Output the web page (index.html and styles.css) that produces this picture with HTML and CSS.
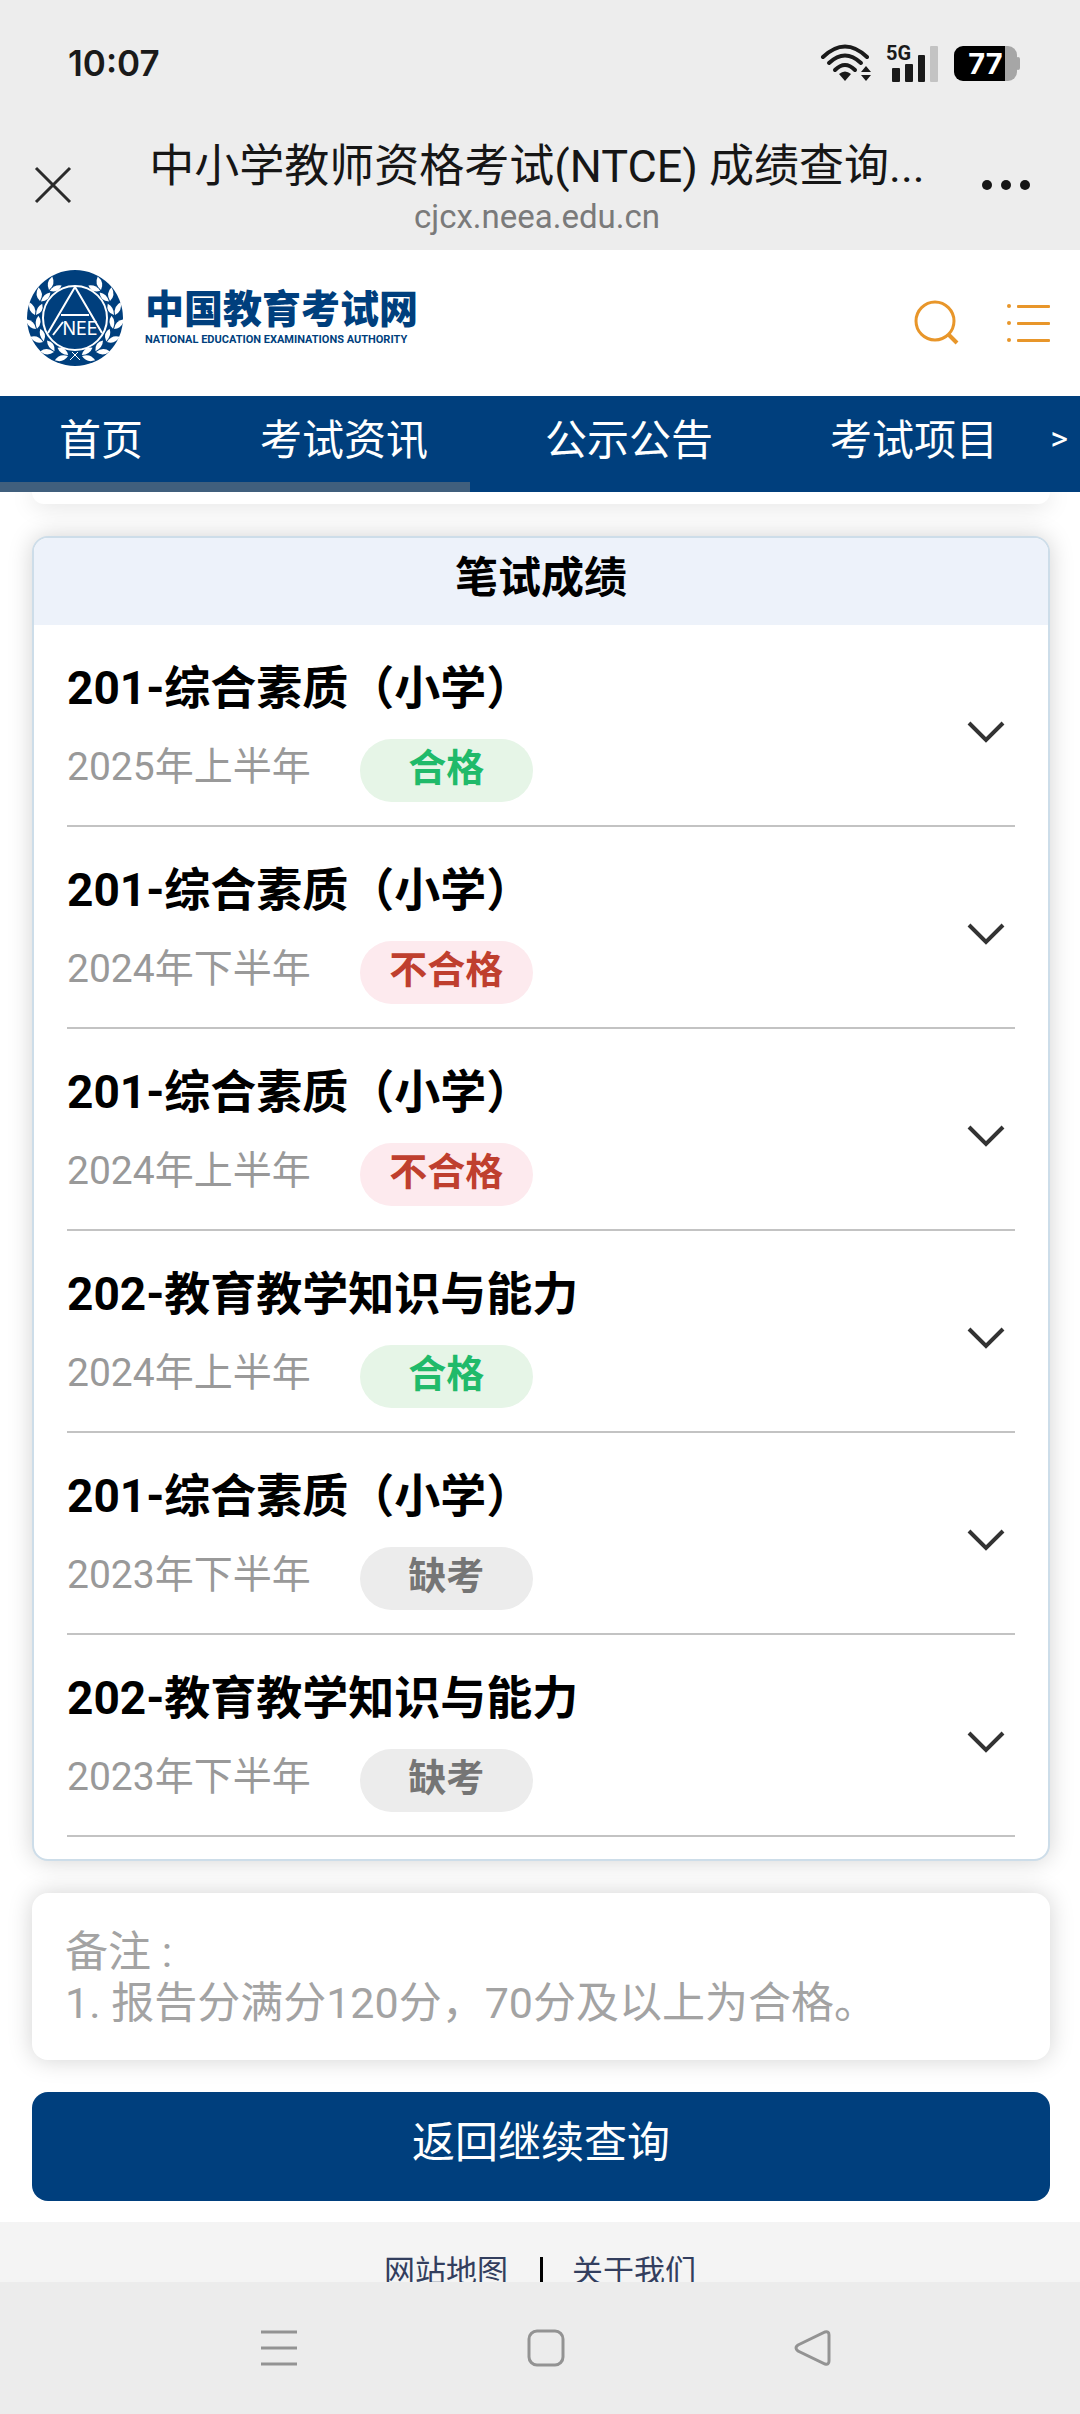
FILE: index.html
```html
<!DOCTYPE html>
<html lang="zh-CN">
  <head>
    <meta charset="utf-8">
    <meta name="viewport" content="width=device-width, initial-scale=1">
    <title>中小学教师资格考试(NTCE) 成绩查询</title>
    <link rel="stylesheet" href="styles.css">
  </head>
  <body>
    <div class="status-bar">
      <span class="clock">10:07</span>
      <div class="status-icons">
        <svg class="wifi" width="54" height="38" viewBox="0 0 54 38" aria-hidden="true">
          <g fill="none" stroke="#1a1a1a" stroke-width="4" stroke-linecap="round">
            <path d="M3 13 Q25 -8 47 13"/>
            <path d="M9 19 Q25 4 41 19"/>
            <path d="M15 26 Q25 16 35 26"/>
          </g>
          <path fill="#1a1a1a" d="M19 30 Q25 25 31 30 L25 37Z"/>
          <path fill="#1a1a1a" d="M46 22 l5 6 h-10z M46 37 l5 -6 h-10z"/>
        </svg>
        <div class="signal">
          <span class="net">5G</span>
          <svg width="46" height="37" viewBox="0 0 46 37" aria-hidden="true">
            <g fill="#1a1a1a">
              <rect x="0" y="23" width="8" height="14" rx="1"/>
              <rect x="13" y="19" width="8" height="18" rx="1"/>
              <rect x="26" y="10" width="7" height="27" rx="1"/>
            </g>
            <rect x="38" y="1" width="8" height="36" rx="1" fill="#c3c3c3"/>
          </svg>
        </div>
        <div class="battery"><span>77</span></div>
      </div>
    </div>

    <header class="title-bar">
      <button class="icon-button" aria-label="关闭">
        <svg width="38" height="38" viewBox="0 0 38 38"><path d="M2 2 L36 36 M36 2 L2 36" stroke="#2b2b2b" stroke-width="3"/></svg>
      </button>
      <div class="title-text">
        <h1>中小学教师资格考试(NTCE) 成绩查询...</h1>
        <p>cjcx.neea.edu.cn</p>
      </div>
      <button class="icon-button" aria-label="更多">
        <svg width="48" height="38" viewBox="0 0 48 38" fill="#161616"><circle cx="5" cy="19" r="5"/><circle cx="24" cy="19" r="5"/><circle cx="43" cy="19" r="5"/></svg>
      </button>
    </header>

    <div class="site-header">
      <a class="logo" href="#">
        <svg width="96" height="96" viewBox="0 0 96 96" aria-hidden="true">
          <defs>
            <g id="leaf">
              <path d="M0 0 Q-8 -3 -7 -12 Q1 -9 0 0Z"/>
              <path d="M1 0 Q0 -8 6 -12 Q9 -4 1 0Z"/>
            </g>
            <g id="branch" fill="#fff">
              <use href="#leaf" transform="translate(41 86) rotate(-78)"/>
              <use href="#leaf" transform="translate(27 82) rotate(-58)"/>
              <use href="#leaf" transform="translate(16 72) rotate(-38)"/>
              <use href="#leaf" transform="translate(9 59) rotate(-16)"/>
              <use href="#leaf" transform="translate(8 45) rotate(6)"/>
              <use href="#leaf" transform="translate(13 31) rotate(24)"/>
              <use href="#leaf" transform="translate(22 20) rotate(44)"/>
            </g>
          </defs>
          <circle cx="48" cy="48" r="48" fill="#003f7d"/>
          <use href="#branch"/>
          <use href="#branch" transform="translate(96 0) scale(-1 1)"/>
          <g fill="none" stroke="#fff" stroke-width="2">
            <circle cx="48" cy="48" r="32" fill="#003f7d"/>
            <path d="M21 63 L48 17 L75 63 M34 45 H62 M26 65 L36 52"/>
            <path d="M43 90 L51 82 M53 90 L45 82" stroke-width="1"/>
          </g>
          <text x="53" y="65" text-anchor="middle" class="logo-mark">NEE</text>
        </svg>
        <span class="logo-text">
          <strong>中国教育考试网</strong>
          <small>NATIONAL EDUCATION EXAMINATIONS AUTHORITY</small>
        </span>
      </a>
      <div class="site-tools">
        <button class="icon-button" aria-label="搜索">
          <svg width="46" height="46" viewBox="0 0 46 46" fill="none" stroke="#e8962a" stroke-width="3"><circle cx="21" cy="21" r="19"/><path d="M34 34 L43 43" stroke-width="4"/></svg>
        </button>
        <button class="icon-button" aria-label="菜单">
          <svg width="44" height="38" viewBox="0 0 44 38" fill="#e8962a">
            <circle cx="3" cy="2" r="2"/><rect x="11" y="1" width="33" height="3" rx="1"/>
            <circle cx="3" cy="19" r="2"/><rect x="11" y="18" width="33" height="3" rx="1"/>
            <circle cx="3" cy="36" r="2"/><rect x="11" y="35" width="33" height="3" rx="1"/>
          </svg>
        </button>
      </div>
    </div>

    <nav class="site-nav">
      <a href="#">首页</a>
      <a href="#">考试资讯</a>
      <a href="#">公示公告</a>
      <a href="#">考试项目</a>
      <span class="nav-more">&gt;</span>
    </nav>

    <div class="page">
      <main>
        <div class="card card-peek"></div>

        <section class="card scores">
          <h2>笔试成绩</h2>
          <ul>
            <li>
              <div>
                <h3>201-综合素质（小学）</h3>
                <p><time>2025年上半年</time><span class="badge pass">合格</span></p>
              </div>
              <button class="icon-button" aria-label="展开"><svg width="38" height="22" viewBox="0 0 38 22"><path d="M2 2 L19 19 L36 2"/></svg></button>
            </li>
            <li>
              <div>
                <h3>201-综合素质（小学）</h3>
                <p><time>2024年下半年</time><span class="badge fail">不合格</span></p>
              </div>
              <button class="icon-button" aria-label="展开"><svg width="38" height="22" viewBox="0 0 38 22"><path d="M2 2 L19 19 L36 2"/></svg></button>
            </li>
            <li>
              <div>
                <h3>201-综合素质（小学）</h3>
                <p><time>2024年上半年</time><span class="badge fail">不合格</span></p>
              </div>
              <button class="icon-button" aria-label="展开"><svg width="38" height="22" viewBox="0 0 38 22"><path d="M2 2 L19 19 L36 2"/></svg></button>
            </li>
            <li>
              <div>
                <h3>202-教育教学知识与能力</h3>
                <p><time>2024年上半年</time><span class="badge pass">合格</span></p>
              </div>
              <button class="icon-button" aria-label="展开"><svg width="38" height="22" viewBox="0 0 38 22"><path d="M2 2 L19 19 L36 2"/></svg></button>
            </li>
            <li>
              <div>
                <h3>201-综合素质（小学）</h3>
                <p><time>2023年下半年</time><span class="badge absent">缺考</span></p>
              </div>
              <button class="icon-button" aria-label="展开"><svg width="38" height="22" viewBox="0 0 38 22"><path d="M2 2 L19 19 L36 2"/></svg></button>
            </li>
            <li>
              <div>
                <h3>202-教育教学知识与能力</h3>
                <p><time>2023年下半年</time><span class="badge absent">缺考</span></p>
              </div>
              <button class="icon-button" aria-label="展开"><svg width="38" height="22" viewBox="0 0 38 22"><path d="M2 2 L19 19 L36 2"/></svg></button>
            </li>
          </ul>
        </section>

        <section class="card notes">
          <p>备注 :</p>
          <p>1. 报告分满分120分，70分及以上为合格。</p>
        </section>

        <button class="back-button">返回继续查询</button>
      </main>

      <footer>
        <a href="#">网站地图</a>
        <a href="#">关于我们</a>
      </footer>
    </div>

    <div class="system-nav">
      <button class="icon-button" aria-label="最近任务">
        <svg width="38" height="38" viewBox="0 0 38 38"><path d="M1 3 H37 M1 19 H37 M1 35 H37"/></svg>
      </button>
      <button class="icon-button" aria-label="主页">
        <svg width="38" height="38" viewBox="0 0 38 38"><rect x="2" y="2" width="34" height="34" rx="8"/></svg>
      </button>
      <button class="icon-button" aria-label="返回">
        <svg width="38" height="38" viewBox="0 0 38 38"><path d="M4 16 L31 3 Q35 2 35 6 V32 Q35 36 31 35 L4 22 Q0 19 4 16Z"/></svg>
      </button>
    </div>
  </body>
</html>
```

FILE: styles.css
```css
* {
  box-sizing: border-box;
}
body {
  margin: 0;
  height: 100vh;
  display: flex;
  flex-direction: column;
  background: #fff;
  color: #000;
  font-family: Roboto, "Noto Sans CJK SC", sans-serif;
}
h1, h2, h3, p, ul {
  margin: 0;
  padding: 0;
  font-size: inherit;
}
a {
  color: inherit;
  text-decoration: none;
}
svg {
  display: block;
}
.icon-button {
  padding: 0;
  border: none;
  background: none;
  cursor: pointer;
}

/* phone status bar */
.status-bar {
  flex: none;
  display: flex;
  align-items: center;
  justify-content: space-between;
  height: 126px;
  padding: 0 63px 0 68px;
  background: #ededed;
}
.clock {
  font-family: Inter, sans-serif;
  font-size: 35px;
  font-weight: 600;
  color: #1a1a1a;
}
.status-icons {
  display: flex;
  align-items: center;
}
.signal {
  position: relative;
  margin: 0 16px 0 18px;
}
.net {
  position: absolute;
  left: -6px;
  top: -3px;
  font-size: 20px;
  font-weight: 700;
  line-height: 22px;
  color: #1a1a1a;
}
.battery {
  position: relative;
  width: 63px;
  height: 35px;
  border-radius: 9px;
  background: linear-gradient(90deg, #000 51px, #a6a6a6 51px);
  color: #fff;
  font-family: Inter, sans-serif;
  font-size: 29px;
  font-weight: 700;
  line-height: 35px;
  text-align: center;
}
.battery::after {
  content: "";
  position: absolute;
  right: -3px;
  top: 11px;
  width: 4px;
  height: 13px;
  border-radius: 2px;
  background: #a6a6a6;
}

/* browser title */
.title-bar {
  flex: none;
  display: flex;
  align-items: center;
  justify-content: space-between;
  height: 124px;
  padding: 0 50px 6px 34px;
  background: #ededed;
}
.title-text {
  padding: 4px 0 0 20px;
  text-align: center;
}
.title-text h1 {
  font-size: 45px;
  font-weight: 400;
  line-height: 60px;
  color: #161616;
  white-space: nowrap;
}
.title-text p {
  font-size: 33px;
  line-height: 40px;
  color: #7a7a7a;
}

/* site header */
.site-header {
  flex: none;
  display: flex;
  align-items: center;
  justify-content: space-between;
  height: 146px;
  padding: 0 30px 10px 27px;
}
.logo {
  display: flex;
  align-items: center;
  gap: 22px;
  color: #003f7d;
}
.logo-mark {
  font-family: Inter, sans-serif;
  font-size: 18px;
  fill: #fff;
}
.logo-text {
  display: flex;
  flex-direction: column;
}
.logo-text strong {
  font-size: 39px;
  font-weight: 900;
  line-height: 44px;
}
.logo-text small {
  font-family: "Liberation Sans Narrow", Roboto, sans-serif;
  font-size: 11px;
  font-weight: 700;
  line-height: 16px;
  white-space: nowrap;
}
.site-tools {
  display: flex;
  align-items: center;
  gap: 46px;
  padding-top: 9px;
}

.site-nav {
  flex: none;
  position: relative;
  display: flex;
  gap: 117px;
  height: 96px;
  padding: 0 59px;
  overflow: hidden;
  background: #003f7d;
  color: #fff;
  font-size: 42px;
  line-height: 90px;
  white-space: nowrap;
}
/* horizontal scroll indicator */
.site-nav::after {
  content: "";
  position: absolute;
  left: 0;
  bottom: 0;
  width: 470px;
  height: 10px;
  background: #405f7d;
}
.nav-more {
  position: absolute;
  right: 12px;
  font-size: 34px;
  line-height: 84px;
}

/* page */
.page {
  flex: 1;
  min-height: 0;
  overflow: hidden;
}
main {
  padding: 0 30px 21px 32px;
}
.card {
  margin-bottom: 32px;
  border-radius: 16px;
  background: #fff;
  box-shadow: 0 0 24px rgba(0, 0, 0, 0.18);
}
.card-peek {
  height: 12px;
  border-radius: 0 0 16px 16px;
}
.scores {
  border: 2px solid #cddde9;
  overflow: hidden;
  padding-bottom: 22px;
}
.scores h2 {
  background: #edf2fa;
  font-size: 43px;
  font-weight: 700;
  line-height: 80px;
  padding-bottom: 7px;
  text-align: center;
}
.scores ul {
  list-style: none;
  padding: 0 33px;
}
.scores li {
  display: flex;
  align-items: center;
  justify-content: space-between;
  height: 202px;
  padding: 2px 10px 0 0;
  border-bottom: 2px solid #c3c3c3;
}
.scores h3 {
  font-size: 46px;
  font-weight: 700;
  line-height: 74px;
}
.scores li p {
  display: flex;
  align-items: center;
  gap: 49px;
  margin-top: 14px;
}
.scores time {
  font-size: 39px;
  line-height: 56px;
  padding-bottom: 6px;
  color: #999;
}
.scores .icon-button {
  padding-top: 12px;
}
.scores path {
  fill: none;
  stroke: #333;
  stroke-width: 4;
}
.badge {
  width: 173px;
  border-radius: 32px;
  font-size: 38px;
  font-weight: 700;
  line-height: 58px;
  padding-bottom: 5px;
  text-align: center;
}
.pass {
  background: #e6f5e7;
  color: #20ba6a;
}
.fail {
  background: #fdeaee;
  color: #bf3f2e;
}
.absent {
  background: #ececec;
  color: #757575;
}

.notes {
  padding: 34px 33px 31px;
  font-size: 43px;
  line-height: 51px;
  color: #a3a3a3;
}
.back-button {
  display: block;
  width: 100%;
  padding: 0 0 6px;
  border: none;
  border-radius: 16px;
  background: #003f7d;
  color: #fff;
  font-family: inherit;
  font-size: 43px;
  line-height: 103px;
  cursor: pointer;
}

footer {
  display: flex;
  justify-content: center;
  padding-top: 30px;
  background: #f4f4f4;
  color: #333e5e;
  font-size: 31px;
  line-height: 40px;
}
footer a {
  padding: 0 32px;
}
footer a + a {
  background: linear-gradient(#000, #000) left center / 3px 31px no-repeat;
}

/* android navigation */
.system-nav {
  flex: none;
  display: flex;
  justify-content: space-between;
  align-items: center;
  height: 132px;
  padding: 0 248px 0 260px;
  background: #ececec;
}
.system-nav svg {
  fill: none;
  stroke: #939393;
  stroke-width: 3;
}
```
